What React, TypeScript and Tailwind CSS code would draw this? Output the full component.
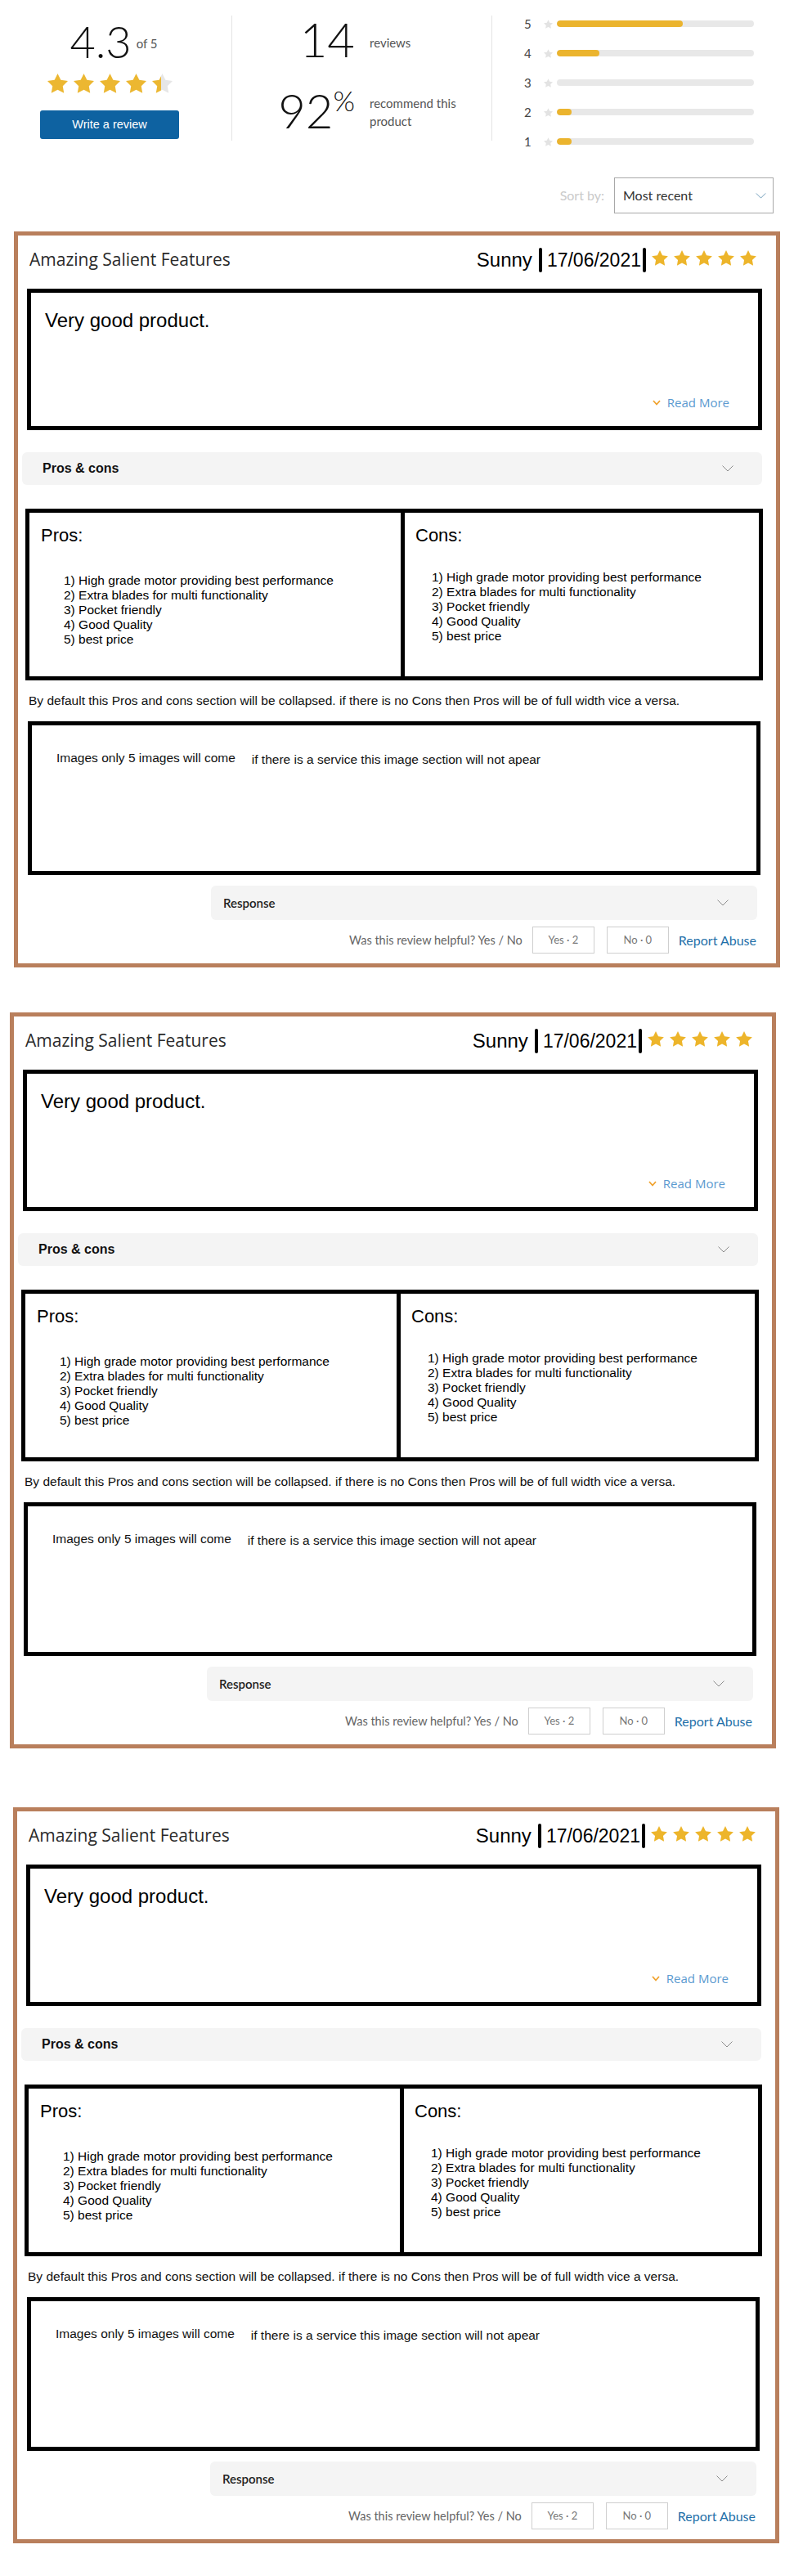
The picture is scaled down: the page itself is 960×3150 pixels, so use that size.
import React from "react";

const STAR = "M12 2l3.09 6.26L22 9.27l-5 4.87 1.18 6.88L12 17.77l-6.18 3.25L7 14.14 2 9.27l6.91-1.01L12 2z";

function Star({ className, color }: { className: string; color: string }) {
  return (
    <svg viewBox="2 2 20 19.2" className={className}>
      <path d={STAR} fill={color} />
    </svg>
  );
}

function HalfStar({ className }: { className: string }) {
  return (
    <svg viewBox="2 2 20 19.2" className={className}>
      <defs>
        <linearGradient id="half-star-grad" x1="0" x2="1" y1="0" y2="0">
          <stop offset="0.45" stopColor="#ecb731" />
          <stop offset="0.45" stopColor="#e6e6e6" />
        </linearGradient>
      </defs>
      <path d={STAR} fill="url(#half-star-grad)" />
    </svg>
  );
}

function Chevron({ className, color }: { className: string; color: string }) {
  return (
    <svg viewBox="0 0 14 8" className={className}>
      <polyline points="0.5,0.5 7,7 13.5,0.5" fill="none" stroke={color} strokeWidth="1" />
    </svg>
  );
}

const bars = [
  { n: 5, w: 64 },
  { n: 4, w: 21.5 },
  { n: 3, w: 0 },
  { n: 2, w: 7.5 },
  { n: 1, w: 7.5 },
];

const items = [
  "1) High grade motor providing best performance",
  "2) Extra blades for multi functionality",
  "3) Pocket friendly",
  "4) Good Quality",
  "5) best price",
];

function Card({ pos }: { pos: string }) {
  return (
    <div className={`${pos} w-[937px] h-[900px] border-[5px] border-[#b97f5c] flex flex-col`}>
      <div className="h-[60px] flex items-center justify-between pl-[14px] pr-[24px]">
        <span className="font-['Open_Sans',sans-serif] text-[21px] text-[#2a2a2a]">Amazing Salient Features</span>
        <div className="flex items-center font-['Liberation_Sans',Arial,sans-serif] text-[24px] leading-[28px] text-black">
          <span>Sunny</span>
          <span className="ml-[8px] w-[4px] h-[30px] bg-black rounded-[2px]" />
          <span className="ml-[6px] text-[23px]">17/06/2021</span>
          <span className="ml-[2px] w-[4px] h-[30px] bg-black rounded-[2px]" />
          <div className="ml-[7px] flex gap-[7px] -mt-[5px]">
            {[0, 1, 2, 3, 4].map((i) => (
              <Star key={i} className="w-[20px] h-[19px]" color="#edb52b" />
            ))}
          </div>
        </div>
      </div>

      <div className="mt-[5px] ml-[11px] w-[899px] h-[173px] border-[5px] border-black flex flex-col justify-between pt-[20px] pb-[19px] pl-[17px] pr-[35px] font-['Liberation_Sans',Arial,sans-serif]">
        <p className="text-[24px] leading-[28px] text-black">Very good product.</p>
        <div className="self-end flex items-center gap-[8px] font-['Open_Sans',sans-serif] text-[15px] leading-[20px] text-[#5b9ad0]">
          <svg viewBox="0 0 10 7" className="w-[10px] h-[7px]">
            <polyline points="1,1 5,5.5 9,1" fill="none" stroke="#f0a22e" strokeWidth="1.8" />
          </svg>
          <span>Read More</span>
        </div>
      </div>

      <div className="mt-[27px] ml-[5px] w-[905px] h-[40px] rounded-[6px] bg-[#f4f4f4] flex items-center justify-between pl-[25px] pr-[35px]">
        <span className="font-['Liberation_Sans',Arial,sans-serif] font-bold text-[16px] text-[#111]">Pros &amp; cons</span>
        <Chevron className="w-[14px] h-[8px]" color="#8a8a8a" />
      </div>

      <div className="mt-[29px] ml-[9px] w-[902px] h-[210px] border-[5px] border-black flex font-['Liberation_Sans',Arial,sans-serif] text-black">
        <div className="w-[454px] pl-[14px] pt-[15px]">
          <p className="text-[22px] leading-[26px]">Pros:</p>
          <ul className="mt-[33px] pl-[28px] text-[15.5px] leading-[18px]">
            {items.map((t) => (
              <li key={t}>{t}</li>
            ))}
          </ul>
        </div>
        <div className="w-[5px] bg-black" />
        <div className="flex-1 pl-[13px] pt-[15px]">
          <p className="text-[22px] leading-[26px]">Cons:</p>
          <ul className="mt-[29px] pl-[20px] text-[15.5px] leading-[18px]">
            {items.map((t) => (
              <li key={t}>{t}</li>
            ))}
          </ul>
        </div>
      </div>

      <p className="mt-[16px] ml-[13px] font-['Liberation_Sans',Arial,sans-serif] text-[15.5px] leading-[18px] text-[#111]">
        By default this Pros and cons section will be collapsed. if there is no Cons then Pros will be of full width vice a versa.
      </p>

      <div className="mt-[16px] ml-[12px] w-[896px] h-[188px] border-[5px] border-black pl-[30px] pt-[31px] flex items-start font-['Liberation_Sans',Arial,sans-serif] text-[15.5px] leading-[18px] text-[#111]">
        <span>Images only 5 images will come</span>
        <span className="ml-[20px] mt-[2px]">if there is a service this image section will not apear</span>
      </div>

      <div className="mt-[13px] ml-[236px] w-[668px] h-[42px] rounded-[6px] bg-[#f4f4f4] flex items-center justify-between pl-[15px] pr-[35px]">
        <span className="font-['Lato',sans-serif] font-semibold text-[15px] text-[#222]">Response</span>
        <Chevron className="w-[14px] h-[8px]" color="#8a8a8a" />
      </div>

      <div className="mt-[8px] h-[33px] flex items-center justify-end pr-[24px] font-['Lato',sans-serif]">
        <span className="text-[14.5px] text-[#666]">Was this review helpful? Yes / No</span>
        <span className="ml-[12px] w-[76px] h-[33px] border border-[#cfcfcf] flex items-center justify-center text-[13px] text-[#777]">Yes · 2</span>
        <span className="ml-[15px] w-[76px] h-[33px] border border-[#cfcfcf] flex items-center justify-center text-[13px] text-[#777]">No · 0</span>
        <span className="ml-[12px] text-[16px] text-[#1f70a9]">Report Abuse</span>
      </div>
    </div>
  );
}

export default function App() {
  return (
    <div className="w-[960px] min-h-[3150px] bg-white pb-[40px]">
      <div className="flex h-[200px]">
        <div className="w-[268px] mr-[15px] flex flex-col items-center pt-[24px]">
          <div className="flex items-start ml-[10px]">
            <span className="font-['Lato',sans-serif] font-light text-[54px] leading-none text-[#111]">4.3</span>
            <span className="ml-[6px] mt-[19px] font-['Lato',sans-serif] text-[15px] leading-[20px] text-[#555]">of 5</span>
          </div>
          <div className="mt-[12px] flex gap-[7px]">
            {[0, 1, 2, 3].map((i) => (
              <Star key={i} className="w-[25px] h-[24px]" color="#ecb731" />
            ))}
            <HalfStar className="w-[25px] h-[24px]" />
          </div>
          <div className="mt-[21px] w-[170px] h-[35px] rounded-[3px] bg-[#0e62a1] flex items-center justify-center font-['Liberation_Sans',Arial,sans-serif] text-[14.5px] text-white">
            Write a review
          </div>
        </div>
        <div className="w-px h-[153px] mt-[19px] bg-[#e4e4e4]" />

        <div className="w-[317px] pt-[19px] font-['Lato',sans-serif]">
          <div className="flex items-start">
            <div className="w-[150px] flex justify-end">
              <span className="font-light text-[58px] leading-none text-[#111]">14</span>
            </div>
            <span className="ml-[18px] mt-[23px] text-[15px] leading-[20px] text-[#555]">reviews</span>
          </div>
          <div className="mt-[29px] flex items-start">
            <div className="w-[150px] flex justify-end items-start">
              <span className="font-light text-[58px] leading-none text-[#111]">92</span>
              <span className="font-light text-[34px] leading-none text-[#111]">%</span>
            </div>
            <div className="ml-[18px] mt-[9px] text-[15px] leading-[22px] text-[#555]">
              <p>recommend this</p>
              <p>product</p>
            </div>
          </div>
        </div>
        <div className="w-px h-[153px] mt-[19px] bg-[#e4e4e4]" />

        <div className="flex-1 pt-[11px] pl-[39px] font-['Lato',sans-serif]">
          {bars.map((b) => (
            <div key={b.n} className="h-[36px] flex items-center">
              <span className="w-[12px] text-[15px] text-[#444]">{b.n}</span>
              <Star className="ml-[12px] w-[11px] h-[11px]" color="#e3e3e3" />
              <div className="ml-[5px] w-[241px] h-[8px] rounded-full bg-[#e8e8e8] overflow-hidden">
                <div className="h-full rounded-full bg-[#ebb42e]" style={{ width: `${b.w}%` }} />
              </div>
            </div>
          ))}
        </div>
      </div>

      <div className="mt-[17px] h-[44px] flex items-center justify-end pr-[14px] font-['Lato',sans-serif]">
        <span className="text-[16px] text-[#cacaca]">Sort by:</span>
        <div className="ml-[12px] w-[195px] h-[44px] border border-[#a8a8a8] flex items-center justify-between pl-[10px] pr-[8px]">
          <span className="text-[16px] text-[#333]">Most recent</span>
          <Chevron className="w-[13px] h-[7px]" color="#5b8fb0" />
        </div>
      </div>

      <Card pos="mt-[22px] ml-[17px]" />
      <Card pos="mt-[55px] ml-[12px]" />
      <Card pos="mt-[72px] ml-[16px]" />
    </div>
  );
}
